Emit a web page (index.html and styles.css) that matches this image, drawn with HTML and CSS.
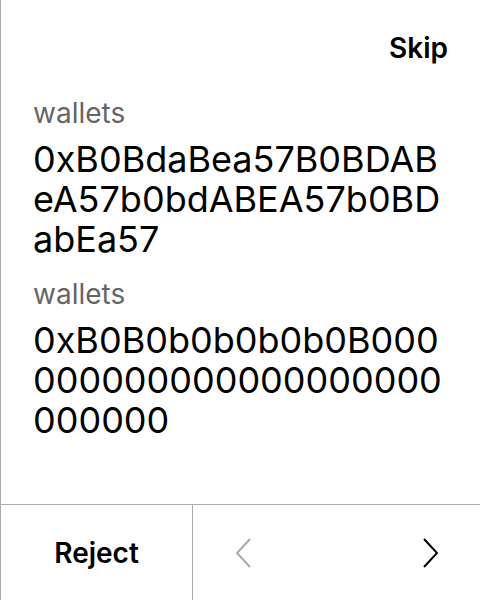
FILE: index.html
```html
<!DOCTYPE html>
<html>
<head>
<meta charset="utf-8">
<link rel="stylesheet" href="styles.css">
</head>
<body>
<div class="screen">
  <header class="top">
    <span class="skip">Skip</span>
  </header>
  <main class="content">
    <section class="field">
      <div class="label">wallets</div>
      <div class="value">0xB0BdaBea57B0BDABeA57b0bdABEA57b0BDabEa57</div>
    </section>
    <section class="field">
      <div class="label">wallets</div>
      <div class="value">0xB0B0b0b0b0b0B000000000000000000000000000</div>
    </section>
  </main>
  <footer class="bottom">
    <div class="reject">Reject</div>
    <div class="nav">
      <svg class="chev prev" width="16" height="30" viewBox="0 0 16 30"><path d="M15 1 L2 15 L15 29" fill="none" stroke="currentColor" stroke-width="2"/></svg>
      <svg class="chev next" width="16" height="30" viewBox="0 0 16 30"><path d="M1 1 L14 15 L1 29" fill="none" stroke="currentColor" stroke-width="2"/></svg>
    </div>
  </footer>
</div>
</body>
</html>
```
FILE: styles.css
```css
* { box-sizing: border-box; }
html, body { margin: 0; padding: 0; background: #fff; }
body { font-family: Inter, "Noto Sans", sans-serif; color: #000; }
.screen {
  width: 480px;
  height: 600px;
  border-left: 1px solid #aaa;
  display: flex;
  flex-direction: column;
}
.top {
  display: flex;
  justify-content: flex-end;
  padding: 31px 32px 0 0;
  height: 96px;
}
.skip { font-size: 28px; font-weight: 600; line-height: 34px; }
.content {
  flex: 1;
  padding: 0 32px 0 32px;
}
.field { margin-bottom: 18px; }
.label { font-size: 28px; color: #666; line-height: 34px; }
.value {
  font-size: 36px;
  line-height: 40px;
  word-break: break-all;
  margin-top: 9px;
}
.bottom {
  height: 96px;
  border-top: 1px solid #aaa;
  display: flex;
}
.reject {
  width: 192px;
  border-right: 1px solid #aaa;
  display: flex;
  align-items: center;
  justify-content: center;
  font-size: 28px;
  font-weight: 600;
}
.nav {
  flex: 1;
  display: flex;
  align-items: center;
  justify-content: space-between;
  padding: 0 41px 0 42px;
}
.chev.prev { color: #aaa; }
.chev.next { color: #000; }
```
